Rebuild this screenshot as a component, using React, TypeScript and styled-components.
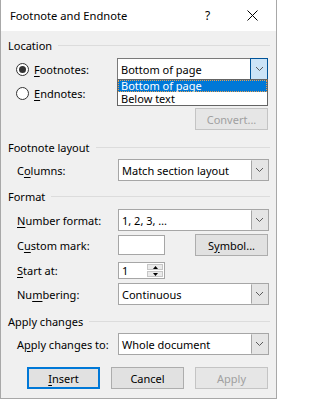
import React from 'react';
import styled, { createGlobalStyle } from 'styled-components';

const GlobalStyle = createGlobalStyle`
    * {
        box-sizing: border-box;
    }
    body {
        margin: 0;
        background: #ffffff;
        font-family: 'Noto Sans', 'Liberation Sans', sans-serif;
        font-size: 11px;
        color: #000000;
    }
`;

const Window = styled.div`
    width: 277px;
    height: 399px;
    display: flex;
    flex-direction: column;
    background: #f0f0f0;
    border: 1px solid #a8a8a8;
    border-top: 0;
`;

const TitleBar = styled.div`
    height: 31px;
    display: flex;
    align-items: center;
    background: #ffffff;
    padding-left: 9px;
`;

const Title = styled.div`
    flex: 1;
    font-size: 11.2px;
`;

const TitleHelp = styled.div`
    width: 14px;
    font-size: 12px;
    margin-right: 17px;
`;

const TitleClose = styled.div`
    width: 40px;
    display: flex;
    align-items: center;
    padding-left: 11px;
`;

const Body = styled.div`
    flex: 1;
    display: flex;
    flex-direction: column;
    padding: 0 6px 0 7px;
`;

const GroupHeader = styled.div<{ $top: number }>`
    height: 16px;
    margin-top: ${(p) => p.$top}px;
    display: flex;
    align-items: center;
    gap: 6px;
    &::after {
        content: '';
        flex: 1;
        height: 1px;
        background: #dcdcdc;
    }
`;

const Row = styled.div<{ $top: number }>`
    display: flex;
    align-items: center;
    margin-top: ${(p) => p.$top}px;
    padding-left: 9px;
    width: 261px;
`;

const Label = styled.div`
    width: 101px;
    white-space: nowrap;
`;

const Control = styled.div`
    width: 151px;
    display: flex;
    align-items: center;
    position: relative;
`;

const Key = styled.span`
    text-decoration: underline;
    text-underline-offset: 2px;
`;

const RadioLabel = styled.label`
    width: 101px;
    height: 22px;
    display: flex;
    align-items: center;
    gap: 5px;
    margin-left: -1px;
`;

const RadioCircle = styled.span<{ $checked?: boolean }>`
    width: 13px;
    height: 13px;
    border-radius: 50%;
    border: 1px solid #333333;
    background: #ffffff;
    display: flex;
    align-items: center;
    justify-content: center;
    &::after {
        content: '';
        width: 7px;
        height: 7px;
        border-radius: 50%;
        background: ${(p) => (p.$checked ? '#333333' : 'transparent')};
    }
`;

const ComboBox = styled.div<{ $focused?: boolean }>`
    width: 151px;
    height: 22px;
    display: flex;
    border: 1px solid ${(p) => (p.$focused ? '#7a7a7a' : '#a6a6a6')};
    background: #ffffff;
`;

const ComboText = styled.div`
    flex: 1;
    display: flex;
    align-items: center;
    padding-left: 3px;
    white-space: nowrap;
`;

const ComboArrow = styled.div<{ $focused?: boolean }>`
    display: flex;
    align-items: center;
    justify-content: center;
    background: ${(p) => (p.$focused ? '#cce4f7' : '#e5e5e5')};
    border: 1px solid ${(p) => (p.$focused ? '#005499' : 'transparent')};
    border-left: 1px solid ${(p) => (p.$focused ? '#005499' : '#a6a6a6')};
    margin: ${(p) => (p.$focused ? '-1px -1px -1px 0' : '0')};
    width: ${(p) => (p.$focused ? '18px' : '17px')};
`;

const DropList = styled.div`
    position: absolute;
    top: 21px;
    left: 0;
    width: 151px;
    height: 27px;
    background: #ffffff;
    border: 1px solid #646464;
    z-index: 2;
`;

const DropItem = styled.div<{ $selected?: boolean }>`
    height: 12px;
    line-height: 10px;
    padding-left: 2px;
    white-space: nowrap;
    color: ${(p) => (p.$selected ? '#ffffff' : '#000000')};
    background: ${(p) => (p.$selected ? '#0078d7' : 'transparent')};
    border: 1px dotted ${(p) => (p.$selected ? '#e8a050' : 'transparent')};
    margin-bottom: 1px;
`;

const Button = styled.button<{ $default?: boolean }>`
    width: 73px;
    height: 22px;
    padding: 0;
    font: inherit;
    color: ${(p) => (p.disabled ? '#a0a0a0' : '#000000')};
    background: ${(p) => (p.disabled ? '#e6e6e6' : '#e1e1e1')};
    border: ${(p) => (p.$default ? '2px solid #0078d7' : `1px solid ${p.disabled ? '#c4c4c4' : '#adadad'}`)};
`;

const TextBox = styled.div`
    width: 47px;
    height: 20px;
    background: #ffffff;
    border: 1px solid #a6a6a6;
`;

const SpinBox = styled.div`
    width: 47px;
    height: 17px;
    display: flex;
    background: #ffffff;
    border: 1px solid #a6a6a6;
`;

const SpinText = styled.div`
    flex: 1;
    display: flex;
    align-items: center;
    padding-left: 3px;
`;

const SpinButtons = styled.div`
    width: 17px;
    display: flex;
    flex-direction: column;
    padding: 1px 1px 1px 0;
    gap: 1px;
`;

const SpinButton = styled.div`
    flex: 1;
    display: flex;
    align-items: center;
    justify-content: center;
    background: #eaeaea;
    border: 1px solid #c6c6c6;
`;

const RightButton = styled(Button)`
    margin-left: auto;
    margin-right: 1px;
`;

const ButtonRow = styled.div`
    display: flex;
    justify-content: flex-end;
    gap: 11px;
    margin-top: 12px;
    width: 261px;
    padding-right: 1px;
`;

function Chevron(): JSX.Element {
    return (
        <svg width="9" height="6" viewBox="0 0 9 6">
            <polyline points="1,1 4.5,4.5 8,1" fill="none" stroke="#5a5a5a" strokeWidth="1" />
        </svg>
    );
}

function Combo(props: { value: string; focused?: boolean; children?: React.ReactNode }): JSX.Element {
    const { value, focused, children } = props;
    return (
        <Control>
            <ComboBox $focused={focused}>
                <ComboText>{value}</ComboText>
                <ComboArrow $focused={focused}>
                    <Chevron />
                </ComboArrow>
            </ComboBox>
            {children}
        </Control>
    );
}

function App(): JSX.Element {
    return (
        <>
            <GlobalStyle />
            <Window>
                <TitleBar>
                    <Title>Footnote and Endnote</Title>
                    <TitleHelp>?</TitleHelp>
                    <TitleClose>
                        <svg width="11" height="11" viewBox="0 0 11 11">
                            <path d="M0.5 0.5 L10.5 10.5 M10.5 0.5 L0.5 10.5" stroke="#000" strokeWidth="1" />
                        </svg>
                    </TitleClose>
                </TitleBar>
                <Body>
                    <GroupHeader $top={6}>Location</GroupHeader>
                    <Row $top={5}>
                        <RadioLabel>
                            <RadioCircle $checked />
                            <span>
                                <Key>F</Key>ootnotes:
                            </span>
                        </RadioLabel>
                        <Combo value="Bottom of page" focused>
                            <DropList>
                                <DropItem $selected>Bottom of page</DropItem>
                                <DropItem>Below text</DropItem>
                            </DropList>
                        </Combo>
                    </Row>
                    <Row $top={2}>
                        <RadioLabel>
                            <RadioCircle />
                            <span>
                                <Key>E</Key>ndnotes:
                            </span>
                        </RadioLabel>
                    </Row>
                    <Row $top={4}>
                        <Label />
                        <Control>
                            <RightButton disabled>Convert...</RightButton>
                        </Control>
                    </Row>

                    <GroupHeader $top={9}>Footnote layout</GroupHeader>
                    <Row $top={4}>
                        <Label>
                            C<Key>o</Key>lumns:
                        </Label>
                        <Combo value="Match section layout" />
                    </Row>

                    <GroupHeader $top={7}>Format</GroupHeader>
                    <Row $top={5}>
                        <Label>
                            <Key>N</Key>umber format:
                        </Label>
                        <Combo value="1, 2, 3, …" />
                    </Row>
                    <Row $top={3}>
                        <Label>
                            C<Key>u</Key>stom mark:
                        </Label>
                        <Control>
                            <TextBox />
                            <RightButton>
                                S<Key>y</Key>mbol...
                            </RightButton>
                        </Control>
                    </Row>
                    <Row $top={6}>
                        <Label>
                            <Key>S</Key>tart at:
                        </Label>
                        <Control>
                            <SpinBox>
                                <SpinText>1</SpinText>
                                <SpinButtons>
                                    <SpinButton>
                                        <svg width="5" height="3" viewBox="0 0 5 3">
                                            <polygon points="0,3 2.5,0 5,3" fill="#000" />
                                        </svg>
                                    </SpinButton>
                                    <SpinButton>
                                        <svg width="5" height="3" viewBox="0 0 5 3">
                                            <polygon points="0,0 2.5,3 5,0" fill="#000" />
                                        </svg>
                                    </SpinButton>
                                </SpinButtons>
                            </SpinBox>
                        </Control>
                    </Row>
                    <Row $top={4}>
                        <Label>
                            Nu<Key>m</Key>bering:
                        </Label>
                        <Combo value="Continuous" />
                    </Row>

                    <GroupHeader $top={8}>Apply changes</GroupHeader>
                    <Row $top={4}>
                        <Label>
                            A<Key>p</Key>ply changes to:
                        </Label>
                        <Combo value="Whole document" />
                    </Row>

                    <ButtonRow>
                        <Button $default>
                            <Key>I</Key>nsert
                        </Button>
                        <Button>Cancel</Button>
                        <Button disabled>Apply</Button>
                    </ButtonRow>
                </Body>
            </Window>
        </>
    );
}

export default App;
